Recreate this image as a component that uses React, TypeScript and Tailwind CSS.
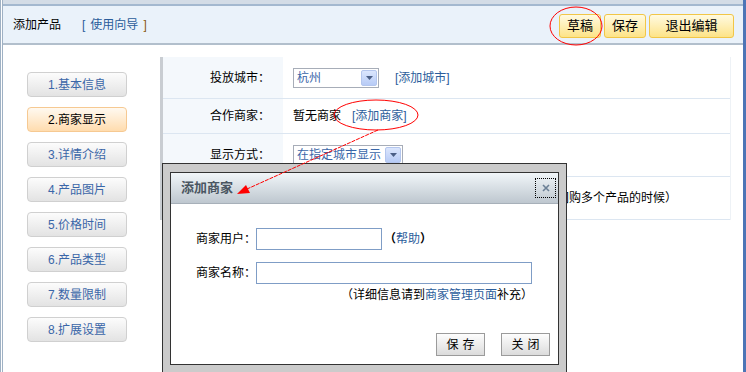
const steps = [
  "1.基本信息",
  "2.商家显示",
  "3.详情介绍",
  "4.产品图片",
  "5.价格时间",
  "6.产品类型",
  "7.数量限制",
  "8.扩展设置",
];

const SelectBox = ({ value, width }: { value: string; width: string }) => (
  <div className={`flex h-[20px] items-center justify-between border border-[#a7adb8] bg-white pl-[3px] ${width}`}>
    <span className="whitespace-nowrap leading-none text-[#3a66a8]">{value}</span>
    <span className="m-px flex h-[16px] w-[16px] shrink-0 items-center justify-center rounded-[2px] border border-[#b4c6ee] bg-linear-to-b from-[#dbe6fd] to-[#b7cbf6]">
      <svg width="7" height="4" viewBox="0 0 7 4">
        <path d="M0 0h7L3.5 4z" fill="#4b5f86" />
      </svg>
    </span>
  </div>
);

const YellowButton = ({ label, width }: { label: string; width: string }) => (
  <button
    type="button"
    className={`h-[24px] rounded-[3px] border border-[#f1c647] bg-linear-to-b from-[#fffae0] to-[#fde386] text-[13px] text-black ${width}`}
  >
    {label}
  </button>
);

const GrayButton = ({ label }: { label: string }) => (
  <button
    type="button"
    className="h-[23px] w-[49px] border border-[#9b9b9b] bg-linear-to-b from-[#fdfdfd] to-[#dcdcdc] pl-[4px] text-[12px] tracking-[4px] text-black"
  >
    {label}
  </button>
);

export default function App() {
  return (
    <div className="relative flex h-[372px] w-[746px] overflow-hidden bg-white font-['Liberation_Sans','Noto_Sans_CJK_SC',sans-serif] text-[12px] text-black">
      <div className="flex min-w-0 flex-1 flex-col border-l-[3px] border-double border-[#9fb1c4]">
        {/* Top strip */}
        <div className="h-[4px] shrink-0 bg-[#d3dce6]" />

        {/* Header */}
        <div className="flex h-[41px] shrink-0 items-center border-t-2 border-b-2 border-t-[#a3b8cf] border-b-[#b2bfcc] bg-[#eaf2fa] pl-[10px] pr-[9px]">
          <span>添加产品</span>
          <span className="ml-[21px] text-[#2b5d9b]">
            [<span className="mx-[5px]">使用向导</span>
            <span className="text-[#8a5a12]">]</span>
          </span>
          <div className="ml-auto mt-[3px] flex gap-[3px]">
            <YellowButton label="草稿" width="w-[42px]" />
            <YellowButton label="保存" width="w-[42px]" />
            <YellowButton label="退出编辑" width="w-[85px]" />
          </div>
        </div>

        {/* Body */}
        <div className="flex flex-1">
          {/* Steps */}
          <div className="flex w-[157px] shrink-0 flex-col gap-[10px] pl-[24px] pt-[27px]">
            {steps.map((s, i) =>
              i === 1 ? (
                <div
                  key={s}
                  className="flex h-[25px] w-[100px] items-center justify-center rounded-[4px] border border-[#f6c992] bg-linear-to-b from-[#fff9f0] to-[#ffdcae] text-black"
                >
                  {s}
                </div>
              ) : (
                <div
                  key={s}
                  className="flex h-[25px] w-[100px] items-center justify-center rounded-[4px] border border-[#d0d0d0] bg-linear-to-b from-[#fcfcfc] to-[#e3e3e3] text-[#3a66a8]"
                >
                  {s}
                </div>
              )
            )}
          </div>

          {/* Form */}
          <div className="flex-1 pr-[12px] pt-[12px]">
            <div className="border-l-[3px] border-r border-l-[#c9cdd2] border-r-[#eef2f6]">
              <div className="flex h-[42px] border-b border-[#dce6f1]">
                <div className="flex w-[120px] items-center justify-end bg-[#f4f8fc] pr-[13px]">投放城市：</div>
                <div className="flex items-center pl-[10px]">
                  <SelectBox value="杭州" width="w-[86px]" />
                  <span className="ml-[16px] text-[#2b5d9b]">[添加城市]</span>
                </div>
              </div>
              <div className="flex h-[35px] border-b border-[#dce6f1]">
                <div className="flex w-[120px] items-center justify-end bg-[#f4f8fc] pr-[13px]">合作商家：</div>
                <div className="flex items-center pl-[10px]">
                  <span>暂无商家</span>
                  <span className="ml-[11px] text-[#2b5d9b]">[添加商家]</span>
                </div>
              </div>
              <div className="flex h-[43px] border-b border-[#dce6f1]">
                <div className="flex w-[120px] items-center justify-end bg-[#f4f8fc] pr-[13px]">显示方式：</div>
                <div className="flex items-center pl-[10px]">
                  <SelectBox value="在指定城市显示" width="w-[110px]" />
                </div>
              </div>
              <div className="flex h-[43px] border-b border-[#dce6f1]">
                <div className="w-[120px] bg-[#f4f8fc]" />
                <div className="flex items-center whitespace-nowrap pl-[10px]">
                  （此项只适用于一个商家同时在多个城市里发布或团购多个产品的时候）
                </div>
              </div>
            </div>
          </div>
        </div>
      </div>

      {/* Right edge bar */}
      <div className="w-[3px] shrink-0 bg-[#4d75b6]" />

      {/* Dialog */}
      <div className="absolute left-[162px] top-[163px] h-[210px] w-[405px] border border-[#333] bg-[#cbcbcb] px-[7px] pb-[7px] pt-[8px]">
        <div className="flex h-full flex-col border border-[#333] bg-white">
          <div className="flex h-[31px] shrink-0 items-center border-b border-[#a7b0b9] bg-linear-to-b from-[#f1f6f9] to-[#bec7cf] pl-[10px] pr-[2px]">
            <span className="text-[13px] font-bold text-[#4a5661]">添加商家</span>
            <span className="ml-auto flex h-[20px] w-[21px] items-center justify-center border border-dotted border-black">
              <svg width="8" height="8" viewBox="0 0 8 8">
                <path d="M1 1l6 6M7 1L1 7" stroke="#6b8096" strokeWidth="1.6" />
              </svg>
            </span>
          </div>

          <div className="flex flex-1 flex-col pt-[24px]">
            <div className="flex items-center">
              <span className="w-[85px] text-right">商家用户：</span>
              <div className="h-[22px] w-[126px] border border-[#7f9dc6]" />
              <span className="ml-[2px]">
                <span className="font-bold">（</span>
                <span className="text-[#2b5d9b]">帮助</span>
                <span className="font-bold">）</span>
              </span>
            </div>
            <div className="mt-[12px] flex items-center">
              <span className="w-[85px] text-right">商家名称：</span>
              <div className="h-[22px] w-[276px] border border-[#7f9dc6]" />
            </div>
            <div className="mt-[3px] pl-[170px] leading-[16px]">
              （详细信息请到<span className="text-[#2b5d9b]">商家管理页面</span>补充）
            </div>
            <div className="mt-auto flex justify-end gap-[16px] pb-[8px] pr-[8px]">
              <GrayButton label="保存" />
              <GrayButton label="关闭" />
            </div>
          </div>
        </div>
      </div>

      {/* Annotations */}
      <svg className="pointer-events-none absolute inset-0" width="746" height="372" viewBox="0 0 746 372">
        <ellipse cx="576" cy="26" rx="26" ry="19" fill="none" stroke="#f00" strokeWidth="1" />
        <ellipse cx="376" cy="115" rx="42" ry="15" fill="none" stroke="#f00" strokeWidth="1" />
        <line x1="378" y1="130" x2="247" y2="189" stroke="#f00" strokeWidth="1" strokeDasharray="4 1" />
        <polygon points="237,194 246,185 250,193" fill="#f00" />
      </svg>
    </div>
  );
}
